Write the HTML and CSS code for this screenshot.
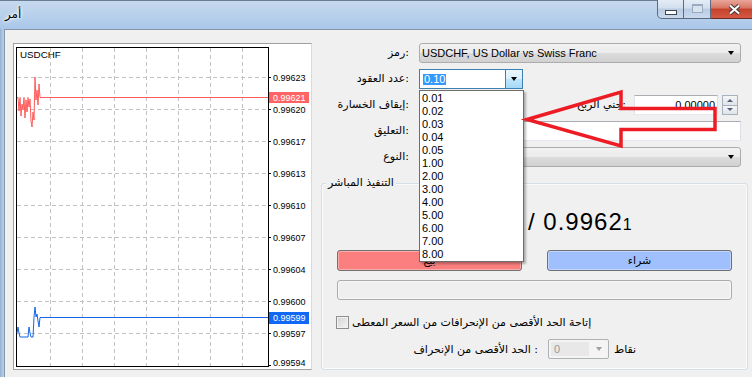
FILE: index.html
```html
<!DOCTYPE html>
<html lang="ar">
<head>
<meta charset="utf-8">
<title>أمر</title>
<link rel="stylesheet" href="styles.css">
</head>
<body>
<div class="window">
  <header class="titlebar">
    <span class="title">أمر</span>
    <div class="caption">
      <span class="cb cb-min"><i></i></span>
      <span class="cb cb-max"><i></i></span>
      <span class="cb cb-close"><svg width="13" height="11" viewBox="0 0 13 11"><path d="M2 1.5L11 9.5M11 1.5L2 9.5" stroke="#3a3a3a" stroke-width="4"/><path d="M2 1.5L11 9.5M11 1.5L2 9.5" stroke="#fff" stroke-width="2"/></svg></span>
    </div>
  </header>
  <div class="client">
    <div class="chart-panel">
      <svg class="chart" viewBox="14 44 297 325" width="297" height="325">
        <path class="grid" d="M50.5 48V366M82.5 48V366M114.5 48V366M146.5 48V366M178.5 48V366M210.5 48V366M242.5 48V366M17 77.5H268M17 109.5H268M17 141.5H268M17 173.5H268M17 205.5H268M17 237.5H268M17 269.5H268M17 301.5H268M17 333.5H268"/>
        <rect x="16.5" y="47.5" width="252" height="319" fill="none" stroke="#000"/>
        <path class="ticks" d="M268 77.5H271M268 109.5H271M268 141.5H271M268 173.5H271M268 205.5H271M268 237.5H271M268 269.5H271M268 301.5H271M268 333.5H271M268 365.5H271"/>
        <polyline class="ask-line" points="17,97.5 18,97.5 19,111 20,97.5 21,116 22,104 23,110 24,97.5 25,118 26,100 27,112 28,97.5 29,107 30,99 31,121 32,127 33,112 34,120 35,77 36,100 37,90 38,105 39,84 40,97.5 268,97.5"/>
        <polyline class="bid-line" points="17,333 18,327 19,333 20,337 28,337 29,327 30,333 31,337 33,337 34,317 35,307 36,317 37,314 38,321 39,327 40,317.5 268,317.5"/>
        <text class="sym" x="20" y="58">USDCHF</text>
        <g class="axis">
          <text x="273" y="81">0.99623</text>
          <rect x="269" y="92" width="40" height="11" fill="#ff6565"/>
          <text x="273" y="101" fill="#fff">0.99621</text>
          <text x="273" y="113">0.99620</text>
          <text x="273" y="145">0.99617</text>
          <text x="273" y="177">0.99613</text>
          <text x="273" y="209">0.99610</text>
          <text x="273" y="241">0.99607</text>
          <text x="273" y="273">0.99604</text>
          <text x="273" y="305">0.99600</text>
          <rect x="269" y="312" width="40" height="12" fill="#1068f4"/>
          <text x="273" y="321" fill="#fff">0.99599</text>
          <text x="273" y="337">0.99597</text>
          <text x="273" y="366">0.99594</text>
        </g>
      </svg>
    </div>
    <form class="order-form">
      <div class="fields">
        <label class="lbl">رمز:</label>
        <div class="combo"><span class="combo-text">USDCHF, US Dollar vs Swiss Franc</span><i class="caret"></i></div>

        <label class="lbl">عدد العقود:</label>
        <div class="volume">
          <span class="volume-value"><span class="selected">0.10</span></span>
          <span class="volume-btn"><i class="caret"></i></span>
          <ul class="lot-list">
            <li>0.01</li><li>0.02</li><li>0.03</li><li>0.04</li><li>0.05</li><li>1.00</li><li>2.00</li><li>3.00</li><li>4.00</li><li>5.00</li><li>6.00</li><li>7.00</li><li>8.00</li>
          </ul>
        </div>

        <label class="lbl">إيقاف الخسارة:</label>
        <div class="sltp">
          <span class="textbox num"></span>
          <span class="spin"><i class="up"></i><i class="down"></i></span>
          <span class="tp-lbl">جني الربح:</span>
          <span class="textbox num">0.00000</span>
          <span class="spin"><i class="up"></i><i class="down"></i></span>
        </div>

        <label class="lbl">التعليق:</label>
        <span class="textbox"></span>

        <label class="lbl">النوع:</label>
        <div class="combo"><span class="combo-text"></span><i class="caret"></i></div>
      </div>

      <div class="group">
        <span class="group-title">التنفيذ المباشر</span>
        <div class="quote">/ 0.9962<small>1</small></div>
        <div class="trade-buttons">
          <button type="button" class="btn sell">بيع</button>
          <button type="button" class="btn buy">شراء</button>
        </div>
        <div class="status-bar"></div>
        <div class="check-row"><span class="checkbox"></span><span>إتاحة الحد الأقصى من الإنحرافات من السعر المعطى</span></div>
        <div class="deviation-row">
          <span class="dev-lbl">الحد الأقصى من الإنحراف :</span>
          <span class="dev-select"><span class="dev-value">0</span><i class="caret"></i></span>
          <span>نقاط</span>
        </div>
      </div>
    </form>
  </div>
  <svg class="annotation" width="752" height="377" viewBox="0 0 752 377">
    <polygon points="527,119.5 621,92 621,108.5 715,108.5 715,129.5 621,129.5 621,146" fill="none" stroke="#ed1c24" stroke-width="3.5"/>
  </svg>
</div>
</body>
</html>
```

FILE: styles.css
```css
* { box-sizing: border-box; }
html, body { margin: 0; padding: 0; }
body {
  width: 752px;
  height: 377px;
  overflow: hidden;
  font-family: "Liberation Sans", "DejaVu Sans", sans-serif;
  font-size: 11px;
  color: #000;
  background: #f0f0f0;
}

.window {
  position: relative;
  width: 752px;
  height: 377px;
  display: flex;
  flex-direction: column;
  background: linear-gradient(90deg, #93b0d2 0, #b4cbe6 3px, #b4cbe6 4px);
}

/* title bar */
.titlebar {
  flex: none;
  height: 29px;
  display: flex;
  justify-content: space-between;
  align-items: flex-start;
  border-top: 1px solid #6b7d94;
  background: linear-gradient(180deg, #c6d9ee 0, #bcd3ec 10px, #b2cceb 20px, #a9c6e9 28px);
}
.title {
  margin: 5px 0 0 5px;
  font-family: "DejaVu Sans", sans-serif;
  font-size: 12px;
  line-height: 16px;
  text-shadow: 0 0 5px #fff, 0 0 3px #fff, 0 0 2px #fff;
}
.caption { display: flex; margin-right: -7px; margin-top: -1px; }
.cb {
  height: 19px;
  width: 27px;
  border: 1px solid #5b6a7e;
  border-top: none;
  display: flex;
  align-items: center;
  justify-content: center;
  background: linear-gradient(180deg, #e4ecf6 0, #d2dfee 45%, #b9cce2 50%, #c9daee 100%);
}
.cb + .cb { border-left: none; }
.cb-min { border-radius: 0 0 0 5px; }
.cb-min i {
  display: block;
  width: 12px;
  height: 5px;
  margin-top: 6px;
  border: 1px solid #3b4656;
  background: #fff;
}
.cb-max i {
  display: block;
  width: 11px;
  height: 9px;
  margin-top: -2px;
  border: 1px solid #9aabc0;
  border-top-width: 2px;
  background: #d9e3ef;
}
.cb-close {
  width: 48px;
  border-color: #6e2a22;
  background: linear-gradient(180deg, #e9a699 0, #d87564 45%, #c5402b 50%, #d55a43 100%);
}

/* client area */
.client {
  flex: 1;
  display: flex;
  margin-left: 4px;
  border-left: 1px solid #8595aa;
  border-top: 1px solid #8595aa;
  background: #f0f0f0;
}

.chart-panel {
  flex: none;
  width: 299px;
  height: 327px;
  margin: 13px 0 0 8px;
  border: 1px solid #a0a0a0;
  border-right-color: #dadada;
  background: #fff;
}
.chart { display: block; }
.grid { stroke: #c2c2c2; stroke-width: 1; stroke-dasharray: 4 3; fill: none; }
.ticks { stroke: #000; stroke-width: 1; }
.ask-line { fill: none; stroke: #ff5b5b; stroke-width: 1; }
.bid-line { fill: none; stroke: #1466e8; stroke-width: 1; }
.chart text { font-family: "Liberation Sans", sans-serif; font-size: 9px; }
.chart .sym { font-size: 9.8px; }

/* form */
.order-form {
  flex: 1;
  padding-top: 13px;
  position: relative;
}
.fields {
  display: grid;
  grid-template-columns: 97px 322px;
  grid-auto-rows: 20px;
  column-gap: 10px;
  row-gap: 6px;
}
.lbl, .tp-lbl {
  font-family: "DejaVu Sans", sans-serif;
  font-size: 11px;
  line-height: 20px;
  text-align: right;
  white-space: nowrap;
  direction: ltr;
}

.combo {
  display: flex;
  align-items: center;
  border: 1px solid #acacac;
  border-radius: 3px;
  padding-left: 2px;
  background: linear-gradient(180deg, #f2f2f2 0, #ebebeb 50%, #dddddd 50%, #d0d0d0 100%);
}
.combo-text { font-size: 11px; white-space: nowrap; }
.caret {
  display: block;
  width: 0;
  height: 0;
  margin-left: auto;
  margin-right: 6px;
  border-left: 3.5px solid transparent;
  border-right: 3.5px solid transparent;
  border-top: 4px solid #000;
}

.volume {
  position: relative;
  width: 104px;
  display: flex;
  border: 1px solid #3c7fb1;
  background: #fff;
}
.volume-value {
  flex: 1;
  display: flex;
  align-items: center;
  padding-left: 3px;
}
.selected {
  background: #3399ff;
  color: #fff;
  font-size: 11px;
  line-height: 11px;
  padding: 0 1px;
}
.volume-btn {
  width: 17px;
  display: flex;
  align-items: center;
  justify-content: center;
  border-left: 1px solid #3c7fb1;
  background: linear-gradient(180deg, #eaf6fd 0, #d9f0fc 50%, #bee6fd 50%, #a7d9f5 100%);
}
.volume-btn .caret { margin: 0; }
.lot-list {
  position: absolute;
  top: 20px;
  left: -1px;
  width: 105px;
  margin: 0;
  padding: 1px 0 0 2px;
  list-style: none;
  background: #fff;
  border: 1px solid #6d6d6d;
  box-shadow: 2px 2px 2px rgba(0, 0, 0, 0.28);
  z-index: 2;
}
.lot-list li { font-size: 11px; line-height: 13px; height: 13px; }

.sltp { display: flex; align-items: stretch; }
.textbox {
  display: flex;
  align-items: center;
  border: 1px solid;
  border-color: #abadb3 #dbdfe6 #e3e9ef #e2e3ea;
  background: #fff;
  font-size: 11px;
}
.textbox.num {
  width: 84px;
  justify-content: flex-end;
  padding-right: 2px;
  color: #000;
}
.spin {
  width: 16px;
  margin-left: 4px;
  display: flex;
  flex-direction: column;
}
.spin i {
  flex: 1;
  display: flex;
  align-items: center;
  justify-content: center;
  border: 1px solid #a7b2c0;
  background: linear-gradient(180deg, #f6f6f6, #dfe3e8);
}
.spin i + i { border-top: none; }
.spin .up::after, .spin .down::after {
  content: "";
  border-left: 3px solid transparent;
  border-right: 3px solid transparent;
}
.spin .up::after { border-bottom: 3px solid #4e5f80; }
.spin .down::after { border-top: 3px solid #4e5f80; }
.tp-lbl { flex: 1; padding-right: 8px; }
.sltp .spin:last-child { margin-right: 3px; }

/* group */
.group {
  position: relative;
  width: 427px;
  margin: 16px 0 0 9px;
  padding: 0 15px 10px;
  border: 1px solid #d5dfe5;
  border-radius: 3px;
  box-shadow: inset 0 0 0 1px #fbfbfb;
  display: flex;
  flex-direction: column;
}
.group-title {
  position: absolute;
  left: 4px;
  top: -8px;
  padding: 0 2px;
  background: #f0f0f0;
  font-family: "DejaVu Sans", sans-serif;
  font-size: 11px;
  line-height: 14px;
}
.quote {
  margin-top: 24px;
  height: 28px;
  line-height: 28px;
  font-size: 24px;
  letter-spacing: 1px;
  padding-left: 191px;
  white-space: pre;
}
.quote small { font-size: 16px; letter-spacing: 0; }
.trade-buttons {
  margin-top: 14px;
  display: flex;
  justify-content: space-between;
}
.btn {
  width: 185px;
  height: 21px;
  padding: 0;
  border: 1px solid #707070;
  border-radius: 3px;
  font-family: "DejaVu Sans", sans-serif;
  font-size: 11px;
  color: #000;
  box-shadow: inset 0 0 0 1px rgba(255, 255, 255, 0.35);
}
.sell { background: #fb7f7f; }
.buy { background: #9fc0fd; }
.status-bar {
  margin-top: 9px;
  height: 20px;
  border: 1px solid #acacac;
  border-radius: 3px;
  background: #efefef;
  box-shadow: inset 0 0 0 1px #f7f7f7;
}
.check-row {
  margin-top: 16px;
  height: 13px;
  display: flex;
  align-items: center;
  gap: 3px;
  margin-left: -1px;
  font-family: "DejaVu Sans", sans-serif;
  font-size: 11px;
  white-space: nowrap;
}
.checkbox {
  width: 13px;
  height: 13px;
  border: 1px solid #8e8f8f;
  background: linear-gradient(135deg, #d3d3d3, #f6f6f6);
  box-shadow: inset 0 0 0 1px #f2f2f2;
}
.deviation-row {
  margin-top: 10px;
  height: 20px;
  display: flex;
  align-items: center;
  font-family: "DejaVu Sans", sans-serif;
  font-size: 11px;
  white-space: nowrap;
}
.dev-lbl { width: 201px; text-align: right; direction: ltr; }
.dev-select {
  margin-left: 10px;
  width: 61px;
  height: 20px;
  display: flex;
  align-items: center;
  border: 1px solid #adb2b5;
  border-radius: 2px;
  background: #f4f4f4;
  padding: 2px;
  margin-right: 5px;
}
.dev-value {
  width: 38px;
  height: 100%;
  background: #e8e8e8;
  color: #9a9a9a;
  font-family: "Liberation Sans", sans-serif;
  padding-left: 3px;
  line-height: 14px;
}
.dev-select .caret {
  margin-right: 4px;
  border-top-color: #a0a0a0;
}

.annotation {
  position: absolute;
  left: 0;
  top: 0;
  pointer-events: none;
  z-index: 5;
}
```
